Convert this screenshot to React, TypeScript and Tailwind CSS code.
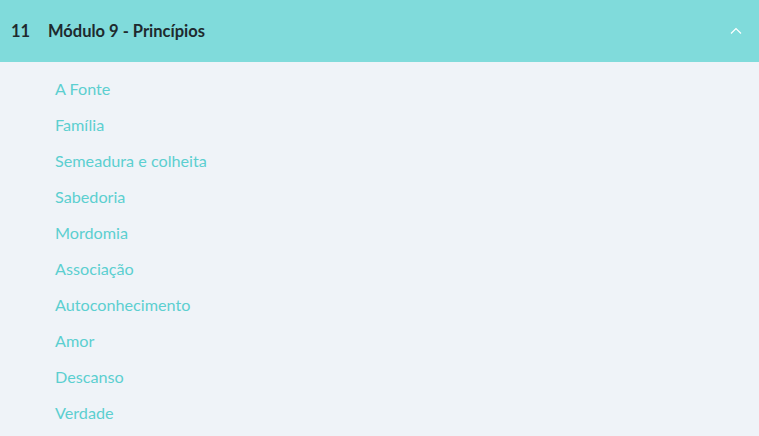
export default function App() {
  const items = [
    "A Fonte",
    "Família",
    "Semeadura e colheita",
    "Sabedoria",
    "Mordomia",
    "Associação",
    "Autoconhecimento",
    "Amor",
    "Descanso",
    "Verdade",
  ];
  return (
    <div className="w-[759px] h-[436px] overflow-hidden bg-[#eff3f8]" style={{ fontFamily: "Lato, 'Open Sans', sans-serif" }}>
      <div className="h-[62px] bg-[#80dbdb] flex items-center pl-[11px] pr-[17px]">
        <span className="text-[16.5px] font-bold text-[#1e2a2e] w-[37px]">11</span>
        <span className="text-[16.5px] font-bold text-[#1e2a2e]">Módulo 9 - Princípios</span>
        <svg className="ml-auto" width="12" height="8" viewBox="0 0 12 8" fill="none">
          <path d="M1 6.5 L6 1.5 L11 6.5" stroke="white" strokeWidth="1.2" />
        </svg>
      </div>
      <ul className="pl-[55px] pt-[9px]">
        {items.map((t) => (
          <li key={t} className="h-[36px] flex items-center text-[16.2px] text-[#5ccfd0]">
            {t}
          </li>
        ))}
      </ul>
    </div>
  );
}
